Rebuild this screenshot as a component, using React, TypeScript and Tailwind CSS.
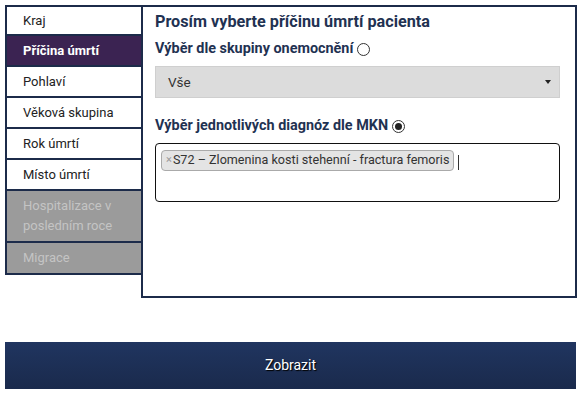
import React from "react";

const items = [
  { name: "Kraj", active: false, disabled: false },
  { name: "Příčina úmrtí", active: true, disabled: false },
  { name: "Pohlaví", active: false, disabled: false },
  { name: "Věková skupina", active: false, disabled: false },
  { name: "Rok úmrtí", active: false, disabled: false },
  { name: "Místo úmrtí", active: false, disabled: false },
  { name: "Hospitalizace v posledním roce", active: false, disabled: true },
  { name: "Migrace", active: false, disabled: true },
];

export default function App() {
  return (
    <div className="w-[582px] h-[401px] bg-white px-[5px] pt-[5px] font-['Roboto',sans-serif]">
      <div className="flex h-[293px]">
        <div className="w-[136px] shrink-0">
          {items.map((it, i) => (
            <div
              key={it.name}
              className={`border-l-2 border-b-2 border-[#1c2b4a] pl-[16px] pr-2 text-[13px] leading-[20px] ${
                i === 0 ? "border-t-2" : ""
              } ${
                it.disabled ? "py-[5px]" : "h-[31px] flex items-center"
              } ${
                it.active
                  ? "bg-[#3b2352] text-white font-bold"
                  : it.disabled
                  ? "bg-[#9b9b9b] text-[#c4c4c4]"
                  : "bg-white text-[#222]"
              }`}
            >
              {it.name}
            </div>
          ))}
        </div>
        <div className="flex-1 border-2 border-[#1c2b4a] pl-[12px] pr-[15px] pt-[4px]">
          <h1 className="text-[16.2px] font-bold text-[#1f3252] leading-[22px]">
            Prosím vyberte příčinu úmrtí pacienta
          </h1>
          <div className="mt-[6px] flex items-center gap-[4px] text-[14.4px] font-bold text-[#1f3252] leading-[20px]">
            Výběr dle skupiny onemocnění
            <span className="inline-block w-[13px] h-[13px] rounded-full border border-[#333] bg-white" />
          </div>
          <div className="mt-[7px] h-[32px] bg-[#dcdcdc] border border-[#cfcfcf] flex items-center justify-between pl-[12px] pr-[8px] text-[13.5px] text-[#333]">
            <span>Vše</span>
            <span className="w-0 h-0 border-l-[3.5px] border-r-[3.5px] border-t-[4px] border-l-transparent border-r-transparent border-t-[#222]" />
          </div>
          <div className="mt-[18px] flex items-center gap-[4px] text-[14.4px] font-bold text-[#1f3252] leading-[20px]">
            Výběr jednotlivých diagnóz dle MKN
            <span className="inline-flex items-center justify-center w-[13px] h-[13px] rounded-full border border-[#333] bg-white">
              <span className="w-[7px] h-[7px] rounded-full bg-[#222]" />
            </span>
          </div>
          <div className="mt-[7px] h-[59px] border border-[#111] rounded-[4px] pl-[5px] pt-[6px] flex items-start">
            <span className="inline-flex items-center h-[21px] bg-[#e4e4e4] border border-[#aaa] rounded-[4px] px-[4px] text-[12.6px] text-[#333]">
              <span className="text-[#999] text-[11px] mr-[1px]">×</span>
              S72 – Zlomenina kosti stehenní - fractura femoris
            </span>
            <span className="ml-[4px] mt-[5px] w-px h-[15px] bg-[#333]" />
          </div>
        </div>
      </div>
      <button className="mt-[44px] w-[571px] h-[47px] bg-gradient-to-b from-[#203560] to-[#1a2a4c] text-white text-[14px] [text-shadow:1px_1px_1px_#000]">
        Zobrazit
      </button>
    </div>
  );
}
